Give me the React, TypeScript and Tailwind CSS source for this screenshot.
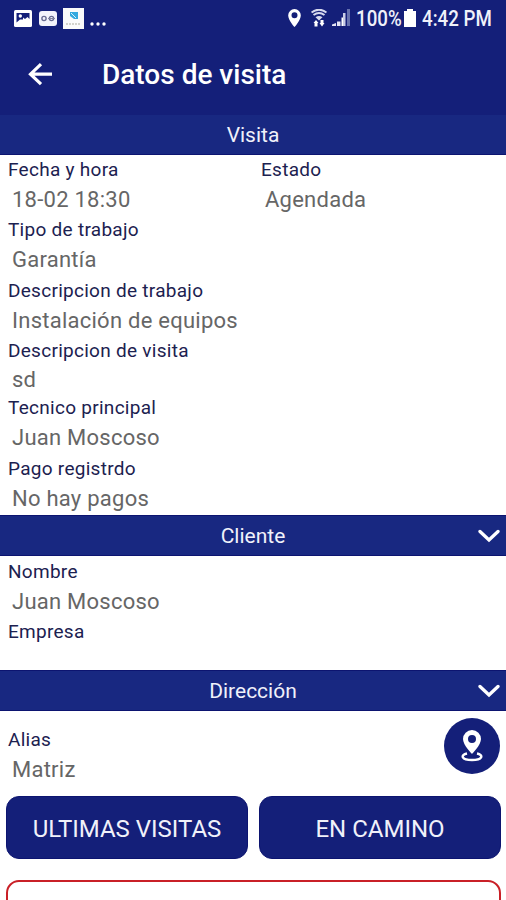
import type { ReactNode } from "react";

type FieldProps = {
  label: string;
  value?: string;
  short?: boolean;
};

function Field({ label, value, short }: FieldProps) {
  return (
    <div className={short ? "h-[57px] px-2" : "h-[60.4px] px-2"}>
      <div className="h-[29px] text-[19px] leading-[29px] tracking-[0.28px] text-[#1c2150]">{label}</div>
      <div
        className={
          short
            ? "pl-1 text-[22px] leading-[30px] tracking-[0.25px] text-[#666]"
            : "pl-1 text-[22px] leading-[32px] tracking-[0.25px] text-[#666]"
        }
      >
        {value}
      </div>
    </div>
  );
}

function SectionHeader({ title, collapsible }: { title: string; collapsible?: boolean }) {
  return (
    <div
      className={
        collapsible
          ? "relative flex h-[41px] shrink-0 items-center justify-center border-y border-[#0c1470] bg-[#182881] pt-0.5 text-[21px] text-[#f0f1fa]"
          : "relative flex h-10 shrink-0 items-center justify-center border-b border-[#0c1470] bg-[#182881] pt-0.5 text-[21px] text-[#f0f1fa]"
      }
    >
      {title}
      {collapsible && (
        <svg className="absolute right-1.5 top-[13px]" width="22" height="14" viewBox="0 0 22 14" fill="none">
          <path d="M2 2.5 L11 11 L20 2.5" stroke="white" strokeWidth="3.3" strokeLinecap="round" />
        </svg>
      )}
    </div>
  );
}

function ActionButton({ children }: { children: ReactNode }) {
  return (
    <button className="h-[63px] flex-1 rounded-[13px] border border-[#0c1470] bg-[#141f79] pt-0.5 text-[24px] text-[#f0f1fa]">
      {children}
    </button>
  );
}

function StatusBar() {
  return (
    <div className="flex h-9 items-center justify-between pl-[14px] pr-[14px] text-[#f0f1fa]">
      <div className="flex items-center">
        <svg width="18" height="17" viewBox="0 0 18 17">
          <rect width="18" height="17" rx="1.5" fill="white" />
          <path d="M2.5 3 H15.5 V9 L13.5 7 L11 9 L9 7.5 V9.5 H6 L2.5 12.5 Z" fill="#141f79" />
          <circle cx="6.3" cy="6" r="1.7" fill="white" />
        </svg>
        <svg className="ml-[7px]" width="18" height="15" viewBox="0 0 18 15">
          <rect width="18" height="15" rx="3" fill="#f3f3fb" />
          <circle cx="5" cy="7.5" r="2.1" fill="none" stroke="#686b91" strokeWidth="1.4" />
          <circle cx="12.5" cy="7.5" r="2.1" fill="none" stroke="#686b91" strokeWidth="1.4" />
          <path d="M9 7.5 H16" stroke="#85879f" />
        </svg>
        <svg className="ml-[6px]" width="21" height="21" viewBox="0 0 21 21">
          <rect width="21" height="21" fill="#fafafa" />
          <path d="M7 4 H15 V11 H11 L7 8 Z" fill="#35a9df" />
          <path d="M8 5 L13 10" stroke="#d8f2fc" />
          <path d="M3 16 H18" stroke="#d2d2cc" strokeWidth="2" strokeDasharray="2 1" />
        </svg>
        <svg className="ml-[6px] mt-3" width="16" height="4" viewBox="0 0 16 4" fill="white">
          <circle cx="2" cy="2" r="1.7" />
          <circle cx="8" cy="2" r="1.7" />
          <circle cx="14" cy="2" r="1.7" />
        </svg>
      </div>
      <div className="flex items-center">
        <svg width="13" height="18" viewBox="0 0 13 18">
          <path
            d="M6.5 0 A6.3 6.3 0 0 0 .2 6.4 C.2 11 6.5 18 6.5 18 S12.8 11 12.8 6.4 A6.3 6.3 0 0 0 6.5 0 Z M6.5 3.3 A3 3 0 1 1 6.5 9.3 A3 3 0 1 1 6.5 3.3 Z"
            fill="white"
            fillRule="evenodd"
          />
        </svg>
        <svg className="ml-[10px]" width="16" height="18" viewBox="0 0 16 18" fill="none">
          <path d="M.5 3.5 Q8 -2 15.5 3.5" stroke="#d8daee" strokeWidth="2" />
          <path d="M2.5 6 Q8 2 13.5 6" stroke="#d8daee" strokeWidth="2" />
          <path d="M4.5 8.3 Q8 5.5 11.5 8.3 L8 11.5 Z" fill="#d8daee" />
          <path d="M2.5 14 L5 11 L7.5 14 H6.5 V17.5 H3.5 V14 Z M8.5 14 H9.5 V11 H12.5 V14 H13.5 L11 17.5 Z" fill="white" />
        </svg>
        <svg className="ml-[5px]" width="18" height="18" viewBox="0 0 18 18">
          <path d="M0 17 V15.5 L4 14 V17 Z M5 12.5 H8.5 V17 H5 Z" fill="#e4e5f4" />
          <rect x="9.5" y="8.5" width="3.5" height="8.5" fill="white" />
          <rect x="11" y="4" width="2.5" height="13" fill="#c8cce5" />
          <rect x="15" y="0" width="3" height="17" fill="#6671ae" />
        </svg>
        <span className="ml-[6px] w-11 origin-left scale-x-[0.85] whitespace-nowrap text-[22px] font-medium">100%</span>
        <svg className="ml-[4px]" width="12" height="18" viewBox="0 0 12 18">
          <path d="M3 0 H9 V2 H12 V18 H0 V2 H3 Z" fill="white" />
        </svg>
        <span className="ml-[6px] w-[70px] origin-left scale-x-[0.85] whitespace-nowrap text-[22px] font-medium">
          4:42 PM
        </span>
      </div>
    </div>
  );
}

export default function App() {
  return (
    <main className="flex h-[900px] w-[506px] flex-col overflow-hidden bg-white font-[Roboto,sans-serif]">
      <header className="h-[115px] shrink-0 bg-[#141f79]">
        <StatusBar />
        <div className="flex h-[77px] items-center pl-7">
          <svg width="24" height="24" viewBox="0 0 24 24" fill="none" stroke="white" strokeWidth="3.2">
            <path d="M13 1.2 L2.5 11.2 L13 21.2 M2.5 11.2 H24" />
          </svg>
          <h1 className="ml-[50px] text-[28px] font-medium text-white">Datos de visita</h1>
        </div>
      </header>

      <SectionHeader title="Visita" />
      <section className="h-[360px] shrink-0">
        <div className="grid grid-cols-2">
          <Field label="Fecha y hora" value="18-02 18:30" />
          <Field label="Estado" value="Agendada" />
        </div>
        <Field label="Tipo de trabajo" value="Garantía" />
        <Field label="Descripcion de trabajo" value="Instalación de equipos" />
        <Field label="Descripcion de visita" value="sd" short />
        <Field label="Tecnico principal" value="Juan Moscoso" />
        <Field label="Pago registrdo" value="No hay pagos" />
      </section>

      <SectionHeader title="Cliente" collapsible />
      <section className="h-[114px] shrink-0 pt-px">
        <Field label="Nombre" value="Juan Moscoso" />
        <Field label="Empresa" />
      </section>

      <SectionHeader title="Dirección" collapsible />
      <section className="flex h-[85px] shrink-0 justify-between pt-[14px]">
        <Field label="Alias" value="Matriz" />
        <button className="mr-[6px] -mt-[7px] flex size-14 items-center justify-center rounded-full bg-[#141f79]">
          <svg width="22" height="32" viewBox="0 0 22 32" fill="none">
            <path
              d="M11 0 A9 9 0 0 0 2 9 C2 15 11 24 11 24 S20 15 20 9 A9 9 0 0 0 11 0 Z M11 5 A4 4 0 1 1 11 13 A4 4 0 1 1 11 5 Z"
              fill="white"
              fillRule="evenodd"
            />
            <path d="M6 23.5 C-1 25 .5 30 11 30 S23 25 16 23.5" stroke="white" strokeWidth="2.4" />
          </svg>
        </button>
      </section>

      <div className="flex shrink-0 gap-[11px] pl-[6px] pr-[5px]">
        <ActionButton>ULTIMAS VISITAS</ActionButton>
        <ActionButton>EN CAMINO</ActionButton>
      </div>
      <div className="ml-[6px] mr-[5px] mt-[21px] h-[63px] shrink-0 rounded-[13px] border-2 border-[#c92027]" />
    </main>
  );
}
